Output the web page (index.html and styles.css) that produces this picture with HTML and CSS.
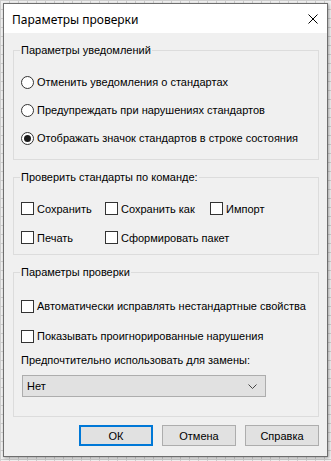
FILE: index.html
```html
<!DOCTYPE html>
<html lang="ru">
<head>
    <meta charset="UTF-8">
    <title>Параметры проверки</title>
    <link rel="stylesheet" href="styles.css">
</head>
<body>
    <div class="dialog">
        <div class="titlebar">
            <span class="title">Параметры проверки</span>
            <svg class="close" width="10" height="10" viewBox="0 0 10 10">
                <path d="M0.5 0.5 L9.5 9.5 M9.5 0.5 L0.5 9.5" stroke="#000" stroke-width="1" fill="none"/>
            </svg>
        </div>

        <div class="content">
            <fieldset class="group group-notify">
                <legend>Параметры уведомлений</legend>
                <div class="row"><span class="radio"></span>Отменить уведомления о стандартах</div>
                <div class="row"><span class="radio"></span>Предупреждать при нарушениях стандартов</div>
                <div class="row"><span class="radio checked"></span>Отображать значок стандартов в строке состояния</div>
            </fieldset>

            <fieldset class="group group-commands">
                <legend>Проверить стандарты по команде:</legend>
                <div class="check-grid">
                    <div class="row"><span class="box"></span>Сохранить</div>
                    <div class="row"><span class="box"></span>Сохранить как</div>
                    <div class="row"><span class="box"></span>Импорт</div>
                    <div class="row"><span class="box"></span>Печать</div>
                    <div class="row wide"><span class="box"></span>Сформировать пакет</div>
                </div>
            </fieldset>

            <fieldset class="group group-check">
                <legend>Параметры проверки</legend>
                <div class="row row-check"><span class="box"></span>Автоматически исправлять нестандартные свойства</div>
                <div class="row row-check"><span class="box"></span>Показывать проигнорированные нарушения</div>
                <div class="combo-label">Предпочтительно использовать для замены:</div>
                <div class="combo">
                    <span>Нет</span>
                    <svg width="9" height="5" viewBox="0 0 9 5">
                        <path d="M0.5 0.5 L4.5 4.5 L8.5 0.5" stroke="#444" stroke-width="1" fill="none"/>
                    </svg>
                </div>
            </fieldset>

            <div class="buttons">
                <button class="btn default">ОК</button>
                <button class="btn">Отмена</button>
                <button class="btn">Справка</button>
            </div>
        </div>
    </div>
</body>
</html>
```

FILE: styles.css
```css
body {
    margin: 0;
    padding: 3px;
    width: 331px;
    height: 461px;
    box-sizing: border-box;
    background-color: #f2f2f2;
    background-image:
        linear-gradient(to right, #cfcfcf 1px, transparent 1px),
        linear-gradient(to bottom, #cfcfcf 1px, transparent 1px);
    background-size: 9px 9px;
    font-family: 'Liberation Sans', Arial, sans-serif;
    font-size: 11px;
    color: #000;
    overflow: hidden;
}
.dialog {
    width: 325px;
    height: 454px;
    box-sizing: border-box;
    border: 1px solid #6e6e6e;
    background: #f0f0f0;
    box-shadow: 1px 1px 3px rgba(0, 0, 0, 0.35);
}
.titlebar {
    height: 29px;
    background: #fff;
    display: flex;
    align-items: center;
    justify-content: space-between;
    padding: 0 9px 0 8px;
}
.title {
    font-family: 'Noto Sans', 'Open Sans', sans-serif;
    font-size: 12px;
    padding-top: 1px;
}
.close {
    display: block;
    margin-top: 1px;
}
.content {
    padding: 0 8px 0 9px;
}
.group {
    margin: 11px 0 0 0;
    padding: 11px 6px 0 6px;
    border: 1px solid #dcdcdc;
    min-width: 0;
}
.group legend {
    padding: 0 1px;
    line-height: 13px;
}
.row {
    display: flex;
    align-items: center;
    height: 28px;
    padding-left: 1px;
    white-space: nowrap;
}
.group-notify {
    padding-bottom: 7px;
}
.radio {
    width: 11px;
    height: 11px;
    border: 1px solid #333;
    border-radius: 50%;
    background: #fff;
    margin-right: 3px;
    display: flex;
    align-items: center;
    justify-content: center;
    flex-shrink: 0;
}
.radio.checked::after {
    content: "";
    width: 7px;
    height: 7px;
    border-radius: 50%;
    background: #1a1a1a;
}
.box {
    width: 11px;
    height: 11px;
    border: 1px solid #333;
    background: #fff;
    margin-right: 3px;
    flex-shrink: 0;
}
.group-commands {
    padding-top: 10px;
    padding-bottom: 2px;
}
.check-grid {
    display: grid;
    grid-template-columns: 84px 105px auto;
    grid-auto-rows: 29px;
}
.check-grid .row {
    height: 29px;
}
.check-grid .wide {
    grid-column: span 2;
}
.group-check {
    padding-bottom: 19px;
}
.row-check {
    height: 30px;
}
.group-check .row-check:first-of-type {
    margin-top: 1px;
}
.combo-label {
    margin-top: 3px;
    line-height: 13px;
    padding-left: 1px;
}
.combo {
    margin-top: 8px;
    margin-left: 2px;
    width: 244px;
    height: 22px;
    box-sizing: border-box;
    border: 1px solid #adadad;
    background: #e1e1e1;
    display: flex;
    align-items: center;
    justify-content: space-between;
    padding: 0 8px 0 4px;
}
.buttons {
    display: flex;
    justify-content: flex-end;
    gap: 9px;
    margin-top: 8px;
}
.btn {
    width: 74px;
    height: 21px;
    box-sizing: border-box;
    border: 1px solid #adadad;
    background: #e1e1e1;
    font-family: 'Liberation Sans', Arial, sans-serif;
    font-size: 11px;
    color: #000;
    padding: 0;
}
.btn.default {
    border: 2px solid #0078d7;
}
```
